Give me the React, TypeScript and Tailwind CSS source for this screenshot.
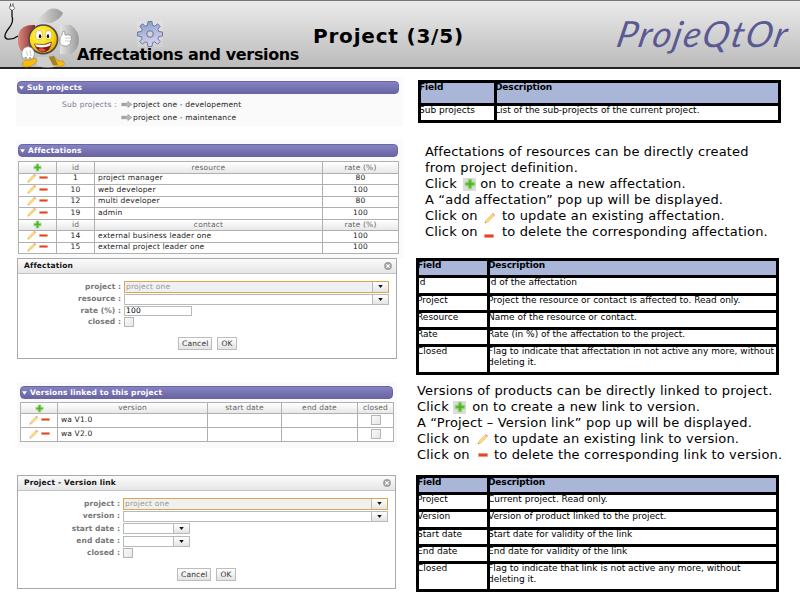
import React from "react";

function Plus({ className = "" }: { className?: string }) {
  return (
    <svg viewBox="0 0 10 10" className={`shrink-0 ${className}`}>
      <path d="M3.500 1h3v2.500H9v3H6.500V9h-3V6.500H1v-3h2.500z" fill="#6cc644" stroke="#9bd67d" strokeWidth=".6" />
      <path d="M5 2v6M2 5h6" stroke="#4fb32c" strokeWidth="1.3" />
    </svg>
  );
}

function Pencil({ className = "" }: { className?: string }) {
  return (
    <svg viewBox="0 0 12 12" className={`shrink-0 ${className}`}>
      <path d="M1 11l1-3L8.500 1.500l2 2L4 10z" fill="#f9d980" stroke="#eec36c" strokeWidth=".6" />
      <path d="M8 2l1-1 2.200 2-1 1z" fill="#eba6b4" />
      <path d="M.7 11.300l.6-1.500 1 1z" fill="#a98450" />
    </svg>
  );
}

function Minus({ className = "" }: { className?: string }) {
  return <i className={`block shrink-0 rounded-[1px] border border-[#f0997c] bg-[#df4526] ${className}`} />;
}

function EditIcons() {
  return (
    <div className="flex items-center justify-center gap-[2px]">
      <Pencil className="size-[10px]" />
      <Minus className="h-[3px] w-[9px]" />
    </div>
  );
}

function Bar({ title }: { title: string }) {
  return (
    <div className="flex h-[13px] items-center gap-[3px] rounded-[4px] border border-[#6a66a4] bg-linear-to-b from-[#8582c4] to-[#6a66a3] pl-[1px] text-[7.5px] leading-none font-bold text-white">
      <svg viewBox="0 0 6 4" className="h-[4px] w-[5px]">
        <path d="M0 0h6L3 4z" fill="#fff" />
      </svg>
      {title}
    </div>
  );
}

function Arrow() {
  return (
    <svg viewBox="0 0 12 8" className="h-[7px] w-[12px] shrink-0">
      <path d="M0 2.500h1.500v3H0zM2 2.500h1.500v3H2zM4 2.500h3V.5L11.500 4 7 7.500v-2H4z" fill="#b8b8b8" stroke="#777" strokeWidth=".5" />
    </svg>
  );
}

const line = "border-[#b0b0b0]";

function HeadCell({ children }: { children?: React.ReactNode }) {
  return (
    <div className={`flex items-center justify-center border-r border-b bg-linear-to-b from-white to-[#e8e8e8] text-[#666] ${line}`}>
      {children}
    </div>
  );
}

function Cell({ children, left = false }: { children?: React.ReactNode; left?: boolean }) {
  return (
    <div className={`flex items-center border-r border-b bg-white pb-[2px] text-[#222] ${line} ${left ? "pl-[3px]" : "justify-center"}`}>
      {children}
    </div>
  );
}

function AffectationRows({ kind, rows }: { kind: string; rows: string[][] }) {
  return (
    <>
      <HeadCell><Plus className="size-[9px]" /></HeadCell>
      <HeadCell>id</HeadCell>
      <HeadCell>{kind}</HeadCell>
      <HeadCell>rate (%)</HeadCell>
      {rows.map(([id, name, rate]) => (
        <React.Fragment key={id}>
          <Cell><EditIcons /></Cell>
          <Cell>{id}</Cell>
          <Cell left>{name}</Cell>
          <Cell>{rate}</Cell>
        </React.Fragment>
      ))}
    </>
  );
}

function Check() {
  return <div className="size-[10px] border border-[#b5b5b5] bg-linear-to-br from-[#fafafa] to-[#e6e6e6]" />;
}

function Combo({ value, wide = false, focus = false }: { value?: string; wide?: boolean; focus?: boolean }) {
  return (
    <div
      className={`flex items-stretch border ${wide ? "w-[265px]" : "w-[67px]"} ${
        focus ? "h-[12px] border-[#d9a74c] bg-[#f0f0f0] text-[#999]" : "h-[11px] border-[#b9b9b9] bg-white"
      }`}
    >
      <div className="flex flex-1 items-center pl-[1px]">{value}</div>
      <div className="flex w-[16px] items-center justify-center border-l border-[#b9b9b9] bg-linear-to-b from-white to-[#e4e4e4]">
        <svg viewBox="0 0 6 4" className="h-[3px] w-[5px]">
          <path d="M0 0h6L3 4z" fill="#111" />
        </svg>
      </div>
    </div>
  );
}

function Row({ label, height, children }: { label: string; height: string; children: React.ReactNode }) {
  return (
    <div className={`flex items-center ${height}`}>
      <div className="w-[103px] text-right font-bold tracking-[0.05px] text-[#777]">{label} :</div>
      <div className="ml-[3px]">{children}</div>
    </div>
  );
}

function Button({ children }: { children: React.ReactNode }) {
  return (
    <div className="flex h-[13px] items-center border border-[#bdbdbd] bg-linear-to-b from-white to-[#e2e2e2] px-[3px] text-[#333]">
      {children}
    </div>
  );
}

function Dialog({ title, size, children }: { title: string; size: string; children: React.ReactNode }) {
  return (
    <section className={`border border-[#a9a9a9] bg-white text-[7.5px] leading-none ${size}`}>
      <div className="flex h-[15px] items-center justify-between border-b border-[#c4c4c4] bg-linear-to-b from-[#fbfbfb] to-[#e6e6e6] pr-[4px] pl-[6px] font-bold text-[#111]">
        {title}
        <svg viewBox="0 0 8 8" className="size-[8px]">
          <circle cx="4" cy="4" r="3.900" fill="#a0a0a0" />
          <path d="M2.300 2.300l3.400 3.400m0-3.400L2.300 5.700" stroke="#fff" strokeWidth="1.200" />
        </svg>
      </div>
      {children}
    </section>
  );
}

function FieldTable({ layout, rows }: { layout: string; rows: string[][] }) {
  return (
    <div className={`grid gap-[3px] bg-black p-[3px] text-[9px] leading-[11px] text-black ${layout}`}>
      {[["Field", "Description"], ...rows].map(([field, text], i) => (
        <React.Fragment key={field}>
          {[field, text].map((value, j) => (
            <div key={j} className={i === 0 ? "bg-[#a9b6d8] font-bold tracking-[-0.1px]" : "bg-white"}>
              <p className="-mt-[1px] -ml-[2px] whitespace-pre-line">{value}</p>
            </div>
          ))}
        </React.Fragment>
      ))}
    </div>
  );
}

function PlusTile({ className }: { className: string }) {
  return (
    <span className={`flex size-[13px] items-center justify-center bg-[#dcdcdc] ${className}`}>
      <Plus className="size-[12px]" />
    </span>
  );
}

function Line({ children }: { children: React.ReactNode }) {
  return <div className="flex h-[16px] items-center whitespace-pre">{children}</div>;
}

function Mascot() {
  return (
    <svg viewBox="0 0 80 70" className="h-[70px] w-[80px] shrink-0">
      <defs>
        <linearGradient id="steel" x1="0" x2="1">
          <stop offset="0" stopColor="#e4e4e4" />
          <stop offset="1" stopColor="#999" />
        </linearGradient>
        <linearGradient id="cape" x1="0" x2="1">
          <stop offset="0" stopColor="#d88a80" />
          <stop offset="1" stopColor="#8c2a2c" />
        </linearGradient>
        <radialGradient id="face" cx=".4" cy=".35" r=".7">
          <stop offset="0" stopColor="#fff56a" />
          <stop offset=".6" stopColor="#fbdc10" />
          <stop offset="1" stopColor="#dc9b05" />
        </radialGradient>
      </defs>
      <path d="M35 21l13-12q8-4 15 3-2 6-12 10z" fill="url(#steel)" />
      <path d="M60 24h11q8 6 8 15t-8 14H60z" fill="url(#steel)" />
      <path d="M37 56h17l4 9q-11 3-21 0z" fill="#cfcfcf" />
      <path d="M35 24q-13-1-16 8-3 10 2 18l14 1z" fill="url(#cape)" />
      <path d="M12 8v7q2 6-3 12-7 9-2 11 6 1 11-3" fill="none" stroke="#111" strokeWidth="1.300" />
      <path d="M9.500 5.500l4-.8 1 3-2 1.600-2.500-1z" fill="#fff" stroke="#333" strokeWidth=".6" />
      <path d="M10.500 5V2.500M13 4.500V2.200" stroke="#333" strokeWidth=".8" />
      <circle cx="43.300" cy="38.300" r="14.300" fill="url(#face)" stroke="#4b4648" strokeWidth="1.600" />
      <ellipse cx="39" cy="34" rx="3.300" ry="4.700" fill="#fff" stroke="#a47b00" strokeWidth=".4" />
      <ellipse cx="48.500" cy="34" rx="3.300" ry="4.500" fill="#fff" stroke="#a47b00" strokeWidth=".4" />
      <ellipse cx="40" cy="35.300" rx="1.200" ry="2" fill="#111" />
      <ellipse cx="48" cy="35.300" rx="1.200" ry="2" fill="#111" />
      <path d="M34.500 43q9 2 17-2-1 10-9 10-6-1-8-8z" fill="#8d1518" stroke="#333" strokeWidth=".5" />
      <path d="M35 43.300q9 2 16-1.500l-1 3q-7 3-14 .8z" fill="#fff" />
      <path d="M38 48.500q4-3 8 .8-4 3-8-.8z" fill="#e8503c" />
      <path d="M60 39q0-4 2-5l1-4q2-1 2 4l5 0q2 1 1 3 1 2-.5 3 .5 3-1.500 3.500-1 2-4 1.500-3 0-5-2z" fill="#fff" stroke="#777" strokeWidth=".6" />
      <path d="M65 37h5M65 40h5" stroke="#999" strokeWidth=".5" />
      <path d="M24 47q4-3 8 0 4 4 2 8l-2 4-2-3-2 4-2-4-3 2q-3-6 1-11z" fill="#fff" stroke="#777" strokeWidth=".6" />
      <path d="M26 50l2 5m2-6l1 6" stroke="#999" strokeWidth=".5" />
      <path d="M22 63q2-5 8-4l5-2 2 3q-4 6-10 6-5 0-5-3z" fill="#f5bd14" stroke="#ad7e0d" strokeWidth=".5" />
      <path d="M49 56l5-1q3 6 9 5 3 3 0 5-6 1-10-1z" fill="#f5bd14" stroke="#ad7e0d" strokeWidth=".5" />
      <path d="M49 56l5-1 4 9-5 0z" fill="#a08031" />
    </svg>
  );
}

function Gear() {
  return (
    <svg viewBox="-13 -13 26 26" className="size-[26px]">
      <defs>
        <linearGradient id="gear" x1="0" y1="0" x2=".3" y2="1">
          <stop offset="0" stopColor="#7d98c9" />
          <stop offset=".6" stopColor="#b6bde0" />
          <stop offset="1" stopColor="#d6d2ef" />
        </linearGradient>
      </defs>
      <path
        d="M-2 -12.500H2L2.500 -8.700L4.800 -7.800L7.600 -10.200L10.200 -7.600L7.800 -4.800L8.700 -2.500L12.500 -2V2L8.700 2.500L7.800 4.800L10.200 7.600L7.600 10.200L4.800 7.800L2.500 8.700L2 12.500H-2L-2.500 8.700L-4.800 7.800L-7.600 10.200L-10.200 7.600L-7.800 4.800L-8.700 2.500L-12.500 2V-2L-8.700 -2.500L-7.800 -4.800L-10.200 -7.600L-7.600 -10.200L-4.800 -7.800L-2.500 -8.700Z"
        fill="url(#gear)"
        stroke="#65709b"
        strokeWidth=".9"
      />
      <circle r="3.300" fill="#d4d4d8" stroke="#65709b" />
    </svg>
  );
}

export default function App() {
  return (
    <div className="h-[600px] w-[800px] overflow-hidden bg-white font-['DejaVu_Sans',Verdana,sans-serif] whitespace-nowrap">
      <header className="flex h-[69px] border-t border-b-2 border-t-[#777] border-b-[#222] bg-linear-to-b from-[#ebebeb] to-[#bbb] text-black">
        <div className="h-[66px] w-[77px]">
          <Mascot />
        </div>
        <div className="flex w-[236px] flex-col">
          <div className="mt-[20px] ml-[60px] h-[26px] w-[26px] bg-white/15"><Gear /></div>
          <h2 className="-mt-[2px] text-[16px] leading-[20px] font-bold tracking-[-0.36px]">Affectations and versions</h2>
        </div>
        <h1 className="mt-[22px] w-[304px] text-[20px] leading-[26px] font-bold tracking-[0.8px]">Project (3/5)</h1>
        <div className="mt-[8px] -skew-x-12 font-['Lato'] text-[36px] leading-[48px] tracking-[2px] text-[#5b5994] italic">ProjeQtOr</div>
      </header>

      <main className="flex">
        <div className="w-[416px] pl-[16px] text-[7.5px] leading-none tracking-[0.17px]">
          <section className="mt-[8px] h-[49px] w-[387px] bg-[#fafafa] pt-[4px] pr-[4px] pl-[1px]">
            <Bar title="Sub projects" />
            <div className="mt-[4px] flex">
              <div className="flex h-[13px] w-[100px] items-center justify-end tracking-[0.25px] text-[#777790]">Sub projects :</div>
              <div className="ml-[4px] text-[#222]">
                <div className="flex h-[13px] items-center"><Arrow />project one - developement</div>
                <div className="flex h-[13px] items-center"><Arrow />project one - maintenance</div>
              </div>
            </div>
          </section>

          <section className="mt-[14px] h-[118px] w-[387px] bg-[#fafafa] pt-[4px] pr-[5px] pl-[2px]">
            <Bar title="Affectations" />
            <div className={`mt-[4px] grid h-[93px] w-[381px] grid-cols-[38px_38px_228px_1fr] grid-rows-8 border-t border-l ${line}`}>
              <AffectationRows
                kind="resource"
                rows={[["1", "project manager", "80"], ["10", "web developer", "100"], ["12", "multi developer", "80"], ["19", "admin", "100"]]}
              />
              <AffectationRows
                kind="contact"
                rows={[["14", "external business leader one", "100"], ["15", "external project leader one", "100"]]}
              />
            </div>
          </section>

          <Dialog title="Affectation" size="ml-[1px] h-[101px] w-[380px]">
            <div className="mt-[6px]">
              <Row label="project" height="h-[13px]"><Combo value="project one" wide focus /></Row>
              <Row label="resource" height="h-[12px]"><Combo wide /></Row>
              <Row label="rate (%)" height="h-[12px]">
                <div className="flex h-[10px] w-[68px] items-center border border-[#b9b9b9] pl-[1px]">100</div>
              </Row>
              <Row label="closed" height="h-[10px]"><Check /></Row>
            </div>
            <div className="mt-[10px] flex gap-[5px] pl-[160px]">
              <Button>Cancel</Button>
              <Button>OK</Button>
            </div>
          </Dialog>

          <section className="mt-[23px] ml-[1px] h-[66px] w-[380px] bg-[#fafafa] pt-[4px] pr-[4px] pl-[3px]">
            <Bar title="Versions linked to this project" />
            <div className={`mt-[3px] grid h-[40px] w-[374px] grid-cols-[37px_150px_74px_76px_1fr] grid-rows-[11px_14px_14px] border-t border-l ${line}`}>
              <HeadCell><Plus className="size-[9px]" /></HeadCell>
              <HeadCell>version</HeadCell>
              <HeadCell>start date</HeadCell>
              <HeadCell>end date</HeadCell>
              <HeadCell>closed</HeadCell>
              {["wa V1.0", "wa V2.0"].map((version) => (
                <React.Fragment key={version}>
                  <Cell><EditIcons /></Cell>
                  <Cell left>{version}</Cell>
                  <Cell />
                  <Cell />
                  <Cell><Check /></Cell>
                </React.Fragment>
              ))}
            </div>
          </section>

          <Dialog title="Project - Version link" size="mt-[27px] ml-[1px] h-[114px] w-[379px]">
            <div className="mt-[6px] -ml-[1px]">
              <Row label="project" height="h-[13px]"><Combo value="project one" wide focus /></Row>
              <Row label="version" height="h-[12px]"><Combo wide /></Row>
              <Row label="start date" height="h-[13px]"><Combo /></Row>
              <Row label="end date" height="h-[12px]"><Combo /></Row>
              <Row label="closed" height="h-[11px]"><Check /></Row>
            </div>
            <div className="mt-[10px] flex gap-[5px] pl-[159px]">
              <Button>Cancel</Button>
              <Button>OK</Button>
            </div>
          </Dialog>
        </div>

        <div className="w-[384px]">
          <FieldTable
            layout="mt-[11px] ml-[2px] w-[363px] grid-cols-[73px_1fr] grid-rows-[20px_14px]"
            rows={[["Sub projects", "List of the sub-projects of the current project."]]}
          />

          <div className="mt-[21px] ml-[9px] text-[13px] leading-[16px] tracking-[0.17px] text-black">
            <Line>Affectations of resources can be directly created</Line>
            <Line>from project definition.</Line>
            <Line>Click <PlusTile className="mr-[4px] ml-[2px]" />on to create a new affectation.</Line>
            <Line>A “add affectation” pop up will be displayed.</Line>
            <Line>Click on <Pencil className="mt-[4px] mr-[6px] ml-[2px] size-[12px]" />to update an existing affectation.</Line>
            <Line>Click on <Minus className="mt-[8px] mr-[8px] ml-[2px] h-[4px] w-[10px]" />to delete the corresponding affectation.</Line>
          </div>

          <FieldTable
            layout="mt-[18px] w-[363px] grid-cols-[68px_1fr] grid-rows-[14px_15px_14px_14px_14px_25px]"
            rows={[
              ["Id", "Id of the affectation"],
              ["Project", "Project the resource or contact is affected to. Read only."],
              ["Resource", "Name of the resource or contact."],
              ["Rate", "Rate (in %) of the affectation to the project."],
              ["Closed", "Flag to indicate that affectation in not active any more, without\ndeleting it."],
            ]}
          />

          <div className="mt-[8px] ml-[1px] text-[13px] leading-[16px] tracking-[0.17px] text-black">
            <Line>Versions of products can be directly linked to project.</Line>
            <Line>Click <PlusTile className="mr-[6px]" />on to create a new link to version.</Line>
            <Line>A “Project – Version link” pop up will be displayed.</Line>
            <Line>Click on <Pencil className="mr-[5px] ml-[3px] size-[12px]" />to update an existing link to version.</Line>
            <Line>Click on <Minus className="mr-[6px] ml-[4px] h-[4px] w-[10px]" />to delete the corresponding link to version.</Line>
          </div>

          <FieldTable
            layout="mt-[12px] w-[363px] grid-cols-[68px_1fr] grid-rows-[14px_14px_15px_14px_14px_25px]"
            rows={[
              ["Project", "Current project. Read only."],
              ["Version", "Version of product linked to the project."],
              ["Start date", "Start date for validity of the link"],
              ["End date", "End date for validity of the link"],
              ["Closed", "Flag to indicate that link is not active any more, without\ndeleting it."],
            ]}
          />
        </div>
      </main>
    </div>
  );
}
